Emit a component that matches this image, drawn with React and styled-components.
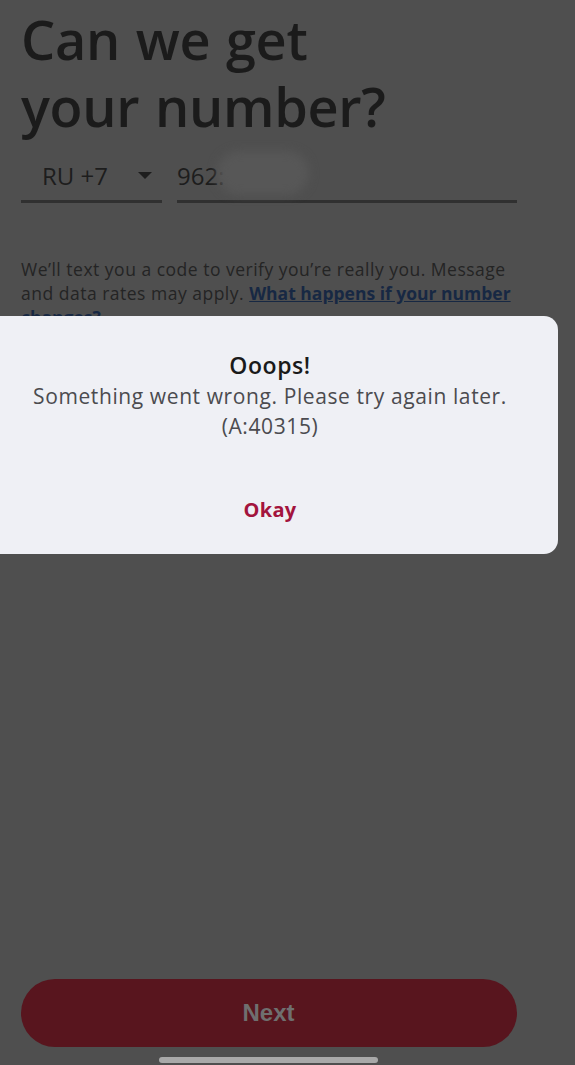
import React from 'react';
import styled, { createGlobalStyle } from 'styled-components';

const GlobalStyle = createGlobalStyle`
  html, body {
    margin: 0;
    padding: 0;
    background: #4f4f4f;
  }
  body {
    font-family: "Open Sans", Lato, sans-serif;
  }
`;

const Screen = styled.div`
  position: relative;
  width: 575px;
  height: 1065px;
  overflow: hidden;
  background: #4f4f4f;
  display: flex;
  flex-direction: column;
`;

const Content = styled.div`
  padding: 6px 58px 0 21px;
  display: flex;
  flex-direction: column;
`;

const Title = styled.h1`
  margin: 0;
  font-size: 54px;
  line-height: 67px;
  font-weight: 600;
  color: #1b1b1b;
  letter-spacing: -0.3px;
  word-spacing: 2px;
`;

const PhoneRow = styled.div`
  display: flex;
  gap: 15px;
  margin-top: 11px;
`;

const Field = styled.div`
  position: relative;
  display: flex;
  align-items: center;
  height: 52px;
  border-bottom: 3px solid #303030;
  width: ${({ $w }) => $w};
  padding-left: ${({ $pad }) => $pad || '0px'};
  box-sizing: border-box;
  font-size: 24px;
  color: #1d1d1d;
`;

const Caret = styled.span`
  width: 0;
  height: 0;
  margin-left: 30px;
  border-left: 7px solid transparent;
  border-right: 7px solid transparent;
  border-top: 7px solid #1d1d1d;
`;

const Blur = styled.span`
  position: absolute;
  left: 40px;
  top: 0;
  width: 92px;
  height: 44px;
  border-radius: 22px;
  background: #575757;
  filter: blur(5px);
`;

const Note = styled.p`
  margin: 54px 0 0;
  font-size: 17.5px;
  line-height: 24px;
  color: #242424;
  width: 520px;
  letter-spacing: 0.5px;
  white-space: nowrap;
`;

const NoteLink = styled.a`
  color: #172843;
  font-weight: 700;
  letter-spacing: 0;
  text-decoration: underline;
`;

const Dialog = styled.div`
  position: absolute;
  left: -18px;
  top: 316px;
  width: 576px;
  height: 238px;
  border-radius: 14px;
  background: #eff0f5;
  display: flex;
  flex-direction: column;
  align-items: center;
  padding-top: 33px;
  box-sizing: border-box;
`;

const DialogTitle = styled.div`
  font-size: 23px;
  font-weight: 600;
  color: #1a1a1a;
  line-height: 32px;
  letter-spacing: 0.6px;
`;

const DialogText = styled.div`
  font-size: 21px;
  line-height: 30px;
  color: #4b4b4f;
  text-align: center;
  letter-spacing: 0.6px;
`;

const OkButton = styled.button`
  margin-top: 55px;
  border: none;
  background: none;
  font-family: inherit;
  font-size: 20px;
  font-weight: 700;
  color: #a3143d;
  padding: 0;
  letter-spacing: 0.3px;
`;

const Footer = styled.div`
  margin-top: auto;
  display: flex;
  flex-direction: column;
  align-items: center;
  padding: 0 59px 2px 21px;
`;

const NextButton = styled.button`
  width: 496px;
  height: 68px;
  border: none;
  border-radius: 34px;
  background: #58151e;
  color: #6f6f6f;
  font-family: "Liberation Sans", Arial, sans-serif;
  font-size: 24px;
  font-weight: 700;
`;

const HomeBar = styled.div`
  width: 219px;
  height: 6px;
  border-radius: 3px;
  background: #a9a9a9;
  margin-top: 10px;
`;

export default function App() {
  return (
    <>
      <GlobalStyle />
      <Screen>
        <Content>
          <Title>
            Can we get
            <br />
            your number?
          </Title>
          <PhoneRow>
            <Field $w="141px" $pad="21px">
              RU +7
              <Caret />
            </Field>
            <Field $w="340px">
              962:
              <Blur />
            </Field>
          </PhoneRow>
          <Note>
            We’ll text you a code to verify you’re really you. Message
            <br />
            and data rates may apply.{' '}
            <NoteLink>What happens if your number</NoteLink>
            <br />
            <NoteLink>changes?</NoteLink>
          </Note>
        </Content>

        <Dialog>
          <DialogTitle>Ooops!</DialogTitle>
          <DialogText>
            Something went wrong. Please try again later.
            <br />
            (A:40315)
          </DialogText>
          <OkButton>Okay</OkButton>
        </Dialog>

        <Footer>
          <NextButton>Next</NextButton>
          <HomeBar />
        </Footer>
      </Screen>
    </>
  );
}
